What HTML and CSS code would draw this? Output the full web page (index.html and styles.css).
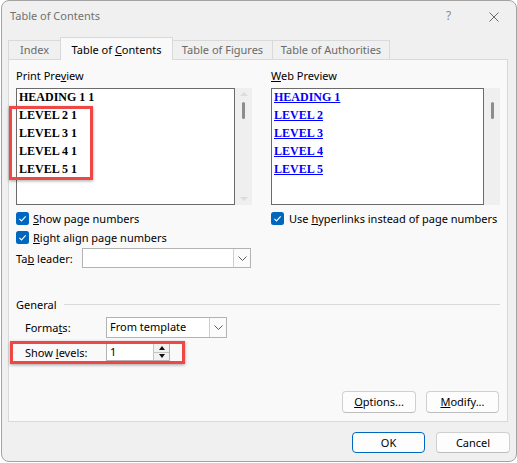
FILE: index.html
```html
<!DOCTYPE html>
<html>
<head>
<meta charset="utf-8">
<link rel="stylesheet" href="styles.css">
</head>
<body>
<div class="window">
  <div class="titlebar">
    <span class="title">Table of Contents</span>
    <span class="help">?</span>
    <svg class="close" width="10" height="10" viewBox="0 0 10 10"><path d="M0.5 0.5 L9.5 9.5 M9.5 0.5 L0.5 9.5" stroke="#6a6a6a" stroke-width="1" fill="none"/></svg>
  </div>
  <div class="tabs">
    <div class="tab t-index">Index</div>
    <div class="tab active t-toc">Table of <u>C</u>ontents</div>
    <div class="tab t-fig">Table of Figures</div>
    <div class="tab t-auth">Table of Authorities</div>
  </div>
  <div class="panel">
    <div class="columns">
      <div class="col col-left">
        <div class="label">Print Pre<u>v</u>iew</div>
        <div class="preview">
          <div class="pbox pbox-left">
            <div class="lines">
              <div>HEADING 1 1</div>
              <div>LEVEL 2 1</div>
              <div>LEVEL 3 1</div>
              <div>LEVEL 4 1</div>
              <div>LEVEL 5 1</div>
            </div>
          </div>
          <div class="scrollbar sb-left">
            <span class="arrow-up"></span>
            <span class="thumb"></span>
            <span class="arrow-down"></span>
          </div>
        </div>
        <div class="check check-first">
          <svg class="cb" width="13" height="13" viewBox="0 0 13 13"><rect x="0" y="0" width="13" height="13" rx="2.5" fill="#0067c0"/><path d="M3.4 6.9 L5.5 8.9 L9.7 4.4" stroke="#fff" stroke-width="1.1" fill="none"/></svg>
          <span><u>S</u>how page numbers</span>
        </div>
        <div class="check check-second">
          <svg class="cb" width="13" height="13" viewBox="0 0 13 13"><rect x="0" y="0" width="13" height="13" rx="2.5" fill="#0067c0"/><path d="M3.4 6.9 L5.5 8.9 L9.7 4.4" stroke="#fff" stroke-width="1.1" fill="none"/></svg>
          <span><u>R</u>ight align page numbers</span>
        </div>
        <div class="leader-row">
          <span class="leader-label">Ta<u>b</u> leader:</span>
          <div class="combo combo-leader">
            <span class="combo-text"></span>
            <span class="combo-btn"><svg width="9" height="5" viewBox="0 0 9 5"><path d="M0.5 0.5 L4.5 4.5 L8.5 0.5" stroke="#5c5c5c" stroke-width="1" fill="none"/></svg></span>
          </div>
        </div>
      </div>
      <div class="divider"></div>
      <div class="col col-right">
        <div class="label"><u>W</u>eb Preview</div>
        <div class="preview">
          <div class="pbox pbox-right">
            <div class="lines web">
              <div><span>HEADING 1</span></div>
              <div><span>LEVEL 2</span></div>
              <div><span>LEVEL 3</span></div>
              <div><span>LEVEL 4</span></div>
              <div><span>LEVEL 5</span></div>
            </div>
          </div>
          <div class="scrollbar sb-right">
            <span class="thumb"></span>
          </div>
        </div>
        <div class="check check-first">
          <svg class="cb" width="13" height="13" viewBox="0 0 13 13"><rect x="0" y="0" width="13" height="13" rx="2.5" fill="#0067c0"/><path d="M3.4 6.9 L5.5 8.9 L9.7 4.4" stroke="#fff" stroke-width="1.1" fill="none"/></svg>
          <span>Use <u>h</u>yperlinks instead of page numbers</span>
        </div>
      </div>
    </div>
    <div class="general">
      <div class="group-head"><span>General</span><span class="rule"></span></div>
      <div class="form-row row-formats">
        <span class="form-label">Forma<u>t</u>s:</span>
        <div class="combo combo-formats">
          <span class="combo-text">From template</span>
          <span class="combo-btn"><svg width="9" height="5" viewBox="0 0 9 5"><path d="M0.5 0.5 L4.5 4.5 L8.5 0.5" stroke="#5c5c5c" stroke-width="1" fill="none"/></svg></span>
        </div>
      </div>
      <div class="form-row row-levels">
        <span class="form-label">Show <u>l</u>evels:</span>
        <div class="spin">
          <span class="spin-text">1</span>
          <span class="spin-btns">
            <span class="spin-up"><span class="tri-up"></span></span>
            <span class="spin-down"><span class="tri-down"></span></span>
          </span>
        </div>
      </div>
    </div>
    <div class="actions">
      <button class="btn btn-options"><u>O</u>ptions...</button>
      <button class="btn btn-modify"><u>M</u>odify...</button>
    </div>
  </div>
  <div class="footer">
    <button class="btn btn-ok">OK</button>
    <button class="btn btn-cancel">Cancel</button>
  </div>
  <div class="highlight hl-preview"></div>
  <div class="highlight hl-levels"></div>
</div>
</body>
</html>
```
FILE: styles.css
```css
* { box-sizing: border-box; }
body {
  margin: 0;
  background: #ffffff;
  font-family: "Noto Sans", "Liberation Sans", sans-serif;
  font-size: 11px;
  color: #000;
}
u { text-decoration: underline; text-underline-offset: 1px; }

.window {
  position: relative;
  margin-left: 1px;
  width: 516px;
  height: 462px;
  border: 1px solid #a3a3a3;
  border-radius: 8px;
  background: #f0f0f0;
  overflow: hidden;
  display: flex;
  flex-direction: column;
}

.titlebar {
  height: 36px;
  flex: none;
  display: flex;
  align-items: flex-start;
  padding: 7px 17px 0 8px;
}
.title { flex: 1; line-height: 16px; color: #707070; }
.help {
  width: 6px;
  margin-right: 37px;
  margin-top: 1px;
  font-size: 12px;
  line-height: 14px;
  color: #8a8a8a;
}
.close { margin-top: 4px; }

.tabs {
  height: 23px;
  flex: none;
  display: flex;
  align-items: flex-end;
  padding-left: 6px;
  margin-bottom: -1px;
  position: relative;
  z-index: 1;
}
.tab {
  height: 19px;
  margin-bottom: 1px;
  border: 1px solid #d9d9d9;
  border-bottom: none;
  background: #f0f0f0;
  color: #6a6a6a;
  text-align: center;
  line-height: 16px;
  padding-top: 1px;
  white-space: nowrap;
}
.tab + .tab { margin-left: -1px; }
.t-index { width: 53px; }
.t-toc { width: 113px; }
.t-fig { width: 101px; }
.t-auth { width: 118px; }
.tab.active {
  height: 23px;
  margin-bottom: 0;
  background: #f9f9f9;
  color: #000;
  padding-top: 4px;
  position: relative;
  z-index: 2;
}

.panel {
  flex: none;
  margin: 0 6px;
  width: 500px;
  height: 363px;
  border: 1px solid #d9d9d9;
  background: #f9f9f9;
  padding: 6px 7px 8px 7px;
  display: flex;
  flex-direction: column;
}

.columns { display: flex; height: 222px; flex: none; }
.col { padding-top: 2px; }
.col-left { width: 236px; }
.col-right { width: 229px; }
.divider { width: 1px; margin-left: 9px; margin-right: 10px; background: #b4b4b4; }

.label { height: 16px; line-height: 16px; margin-bottom: 4px; }

.preview { display: flex; height: 117px; }
.pbox {
  background: #fff;
  border: 1px solid #6b6b6b;
  padding: 0 2px;
  overflow: hidden;
}
.pbox-left { width: 219px; }
.pbox-right { width: 213px; }
.lines {
  margin-top: -1px;
  font-family: "Liberation Serif", "Times New Roman", serif;
  font-weight: bold;
  font-size: 12px;
  line-height: 18px;
  white-space: nowrap;
}
.lines.web span { color: #0000ff; text-decoration: underline; text-underline-offset: 1px; }

.scrollbar {
  background: #efefef;
  display: flex;
  flex-direction: column;
  align-items: center;
}
.sb-left { width: 17px; }
.sb-right { width: 16px; }
.thumb {
  width: 3px;
  height: 17px;
  border-radius: 1.5px;
  background: #8c8c8c;
  margin-top: 14px;
}
.sb-left .thumb { margin-top: 6px; }
.arrow-up, .arrow-down { width: 0; height: 0; border-left: 4px solid transparent; border-right: 4px solid transparent; }
.arrow-up { border-bottom: 4px solid #dcdcdc; margin-top: 4px; }
.arrow-down { border-top: 4px solid #dcdcdc; margin-top: auto; margin-bottom: 4px; }

.check { display: flex; align-items: center; height: 18px; gap: 4px; white-space: nowrap; }
.check-first { margin-top: 4px; }
.check-second { margin-top: 1px; }
.col-right .check { gap: 5px; }
.cb { flex: none; }

.leader-row { display: flex; align-items: center; height: 20px; margin-top: 2px; }
.leader-label { width: 66px; }

.combo {
  display: flex;
  background: #fff;
  border: 1px solid #b3b3b3;
}
.combo-leader { width: 169px; height: 20px; }
.combo-formats { width: 121px; height: 21px; }
.combo-text { flex: 1; padding-left: 3px; line-height: 18px; white-space: nowrap; }
.combo-btn {
  width: 17px;
  border-left: 1px solid #cfcfcf;
  background: #fbfbfb;
  display: flex;
  align-items: center;
  justify-content: center;
}

.general { flex: none; margin-top: 8px; }
.group-head { display: flex; align-items: center; height: 16px; }
.rule { flex: 1; height: 1px; background: #dadada; margin-left: 7px; }
.form-row { display: flex; align-items: center; padding-left: 9px; }
.form-label { width: 81px; }
.row-formats { margin-top: 5px; height: 21px; }
.row-levels { margin-top: 5px; height: 18px; }

.spin {
  width: 64px;
  height: 18px;
  display: flex;
  background: #fff;
  border: 1px solid #b3b3b3;
}
.spin-text { flex: 1; padding-left: 3px; line-height: 16px; }
.spin-btns { width: 16px; display: flex; flex-direction: column; border-left: 1px solid #c4c4c4; }
.spin-up, .spin-down { flex: 1; display: flex; align-items: center; justify-content: center; background: #f2f2f2; }
.spin-up { border-bottom: 1px solid #c4c4c4; }
.tri-up { width: 0; height: 0; border-left: 3px solid transparent; border-right: 3px solid transparent; border-bottom: 4px solid #111; }
.tri-down { width: 0; height: 0; border-left: 3px solid transparent; border-right: 3px solid transparent; border-top: 4px solid #111; }

.actions { margin-top: auto; display: flex; justify-content: flex-end; gap: 10px; padding-right: 1px; }

.btn {
  font-family: "Noto Sans", "Liberation Sans", sans-serif;
  font-size: 11px;
  color: #000;
  background: #fdfdfd;
  border: 1px solid #d0d0d0;
  border-bottom-color: #bdbdbd;
  border-radius: 4px;
  padding: 0;
  height: 22px;
  line-height: 18px;
}
.btn-options { width: 74px; }
.btn-modify { width: 73px; }

.footer { flex: 1; display: flex; justify-content: flex-end; gap: 11px; padding: 10px 6px 0 0; }
.footer .btn { height: 21px; }
.btn-ok { width: 73px; border: 1px solid #0067c0; }
.btn-cancel { width: 74px; }

.highlight {
  position: absolute;
  border: 3px solid #ef4646;
  box-shadow: 0 1px 3px rgba(0, 0, 0, 0.35);
}
.hl-preview { left: 7px; top: 105px; width: 84px; height: 74px; }
.hl-levels { left: 8px; top: 340px; width: 175px; height: 23px; }
```
